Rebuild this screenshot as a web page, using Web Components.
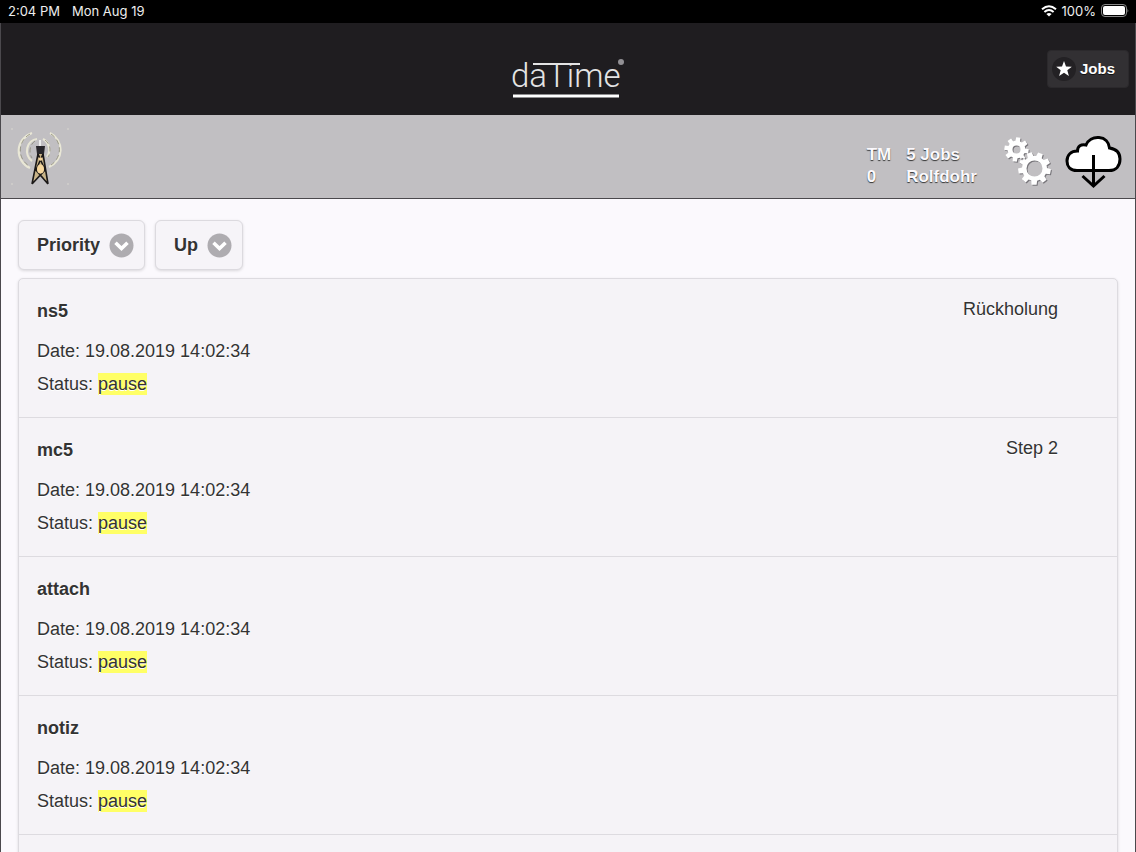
<!DOCTYPE html>
<html lang="en">
<head>
<meta charset="utf-8">
<meta name="viewport" content="width=device-width, initial-scale=1">
<title>daTime Jobs</title>
<style>
  body { margin: 0; background: #fbf9fd; color: #333; font: 18px/24px "Liberation Sans", Arial, sans-serif; }
</style>
</head>
<body>
<job-app></job-app>
<script>
const define = (name, html, setup) => customElements.define(name, class extends HTMLElement {
  connectedCallback() {
    if (this.shadowRoot) return;
    const t = document.createElement('template');
    t.innerHTML = html;
    this.attachShadow({ mode: 'open' }).append(t.content.cloneNode(true));
    if (setup) setup(this, this.shadowRoot);
  }
});

define('status-bar', `
<style>
  :host { display: flex; justify-content: space-between; align-items: center; box-sizing: border-box; height: 23px; padding: 0 7px 2px 8px;
    background: #000; color: #eee; font: 13px/16px Inter, sans-serif; flex: none; }
  div { display: flex; align-items: center; gap: 12px; }
  .right { gap: 5px; }
  svg { display: block; }
</style>
<div><span>2:04 PM</span><span>Mon Aug 19</span></div>
<div class="right">
  <svg width="16" height="12" viewBox="0 0 16 12" fill="none" stroke="#fff" stroke-width="2"><path d="M1 4.3Q8-1.8 15 4.3M3.4 7Q8 3 12.6 7"/><path d="M8 11.6 5.4 9Q8 6.8 10.6 9Z" fill="#fff" stroke="none"/></svg>
  <span>100%</span>
  <svg width="28" height="13" viewBox="0 0 28 13"><rect x=".5" y=".5" width="25" height="12" rx="3.5" fill="none" stroke="#888"/><rect x="2" y="2" width="22" height="9" rx="2" fill="#fff"/><path d="M26.5 4.5q1.5 2 0 4z" fill="#888"/></svg>
</div>`);

define('brand-logo', `
<style>:host { display: block; } svg { display: block; overflow: visible; }</style>
<svg width="112" height="46" viewBox="0 0 112 46" role="img" aria-label="daTime">
  <text x="-2" y="34" font-family="Roboto" font-weight="300" font-size="33" fill="#e4e4e4">daTime</text>
  <path d="M20 11H67" stroke="#e4e4e4" stroke-width="2"/>
  <path d="M0 43H106" stroke="#fff" stroke-width="3"/>
  <circle cx="108" cy="9" r="3" fill="#929094"/>
</svg>`);

define('title-bar', `
<style>
  :host { display: grid; grid-template-columns: 1fr auto 1fr; align-items: center; height: 92px; padding: 0 6px 0 7px; background: #1f1d20; flex: none; }
  brand-logo { grid-column: 2; margin-top: 14px; }
  button { justify-self: end; display: flex; align-items: center; gap: 4px; height: 38px; padding: 0 13px 0 4px;
    border: 1px solid #2b292c; border-radius: 4px; background: #323033; color: #fff; font: bold 15px/20px "Liberation Sans", Arial, sans-serif; text-shadow: 0 1px 0 #111; }
</style>
<brand-logo></brand-logo>
<button type="button"><svg width="24" height="24" viewBox="0 0 24 24"><circle cx="12" cy="12" r="12" fill="#232124"/><path d="M12 4 14 9.4 19.8 9.7 15.3 13.3 16.9 19 12 15.8 7.1 19 8.7 13.3 4.2 9.7 10 9.4Z" fill="#fff"/></svg>Jobs</button>`);

define('cog-pair', `
<style>:host { display: block; } svg { display: block; }</style>
<svg width="48" height="50" viewBox="0 0 48 50"></svg>`, (host, root) => {
  const gear = (cx, cy, outer, inner, hole, teeth, turn) => {
    const pts = [];
    for (let i = 0; i < teeth; i++) {
      for (const [o, r] of [[-.34, inner], [-.22, outer], [.22, outer], [.34, inner]]) {
        const a = (i + o) * 2 * Math.PI / teeth + turn;
        pts.push((cx + r * Math.cos(a)).toFixed(2) + ' ' + (cy + r * Math.sin(a)).toFixed(2));
      }
    }
    return `M${pts.join('L')}ZM${cx - hole} ${cy}a${hole} ${hole} 0 1 0 ${2 * hole} 0a${hole} ${hole} 0 1 0 ${-2 * hole} 0Z`;
  };
  const d = gear(12.5, 12.5, 12.3, 8.8, 4, 8, .15) + gear(30.5, 31.5, 16.5, 12.5, 8, 9, .2);
  root.querySelector('svg').innerHTML =
    `<path d="${d}" fill="#77757a" fill-rule="evenodd" transform="translate(1 1)"/><path d="${d}" fill="#fff" fill-rule="evenodd"/>`;
});

define('info-bar', `
<style>
  :host { display: flex; align-items: center; height: 83px; padding: 0 13px 0 9px; background: #c1bfc2; border-bottom: 1px solid #4b494d; flex: none; }
  dl { display: grid; grid-template-columns: auto auto; grid-auto-flow: column; grid-template-rows: 22px 22px; column-gap: 15px;
    margin: 18px 27px 0 auto; color: #fbf9fd; font-size: 17px; line-height: 22px; text-shadow: 0 1px 1px #333; font-weight: bold; }
  dt, dd { margin: 0; }
  a { display: block; margin-top: 10px; }
  a + a { margin-left: 13px; }
  svg { display: block; }
</style>
<svg width="60" height="60" viewBox="0 0 60 60" fill="none">
  <g stroke="#e9e7d6" stroke-width="2.200"><path d="M22 6A20 19 0 0 0 20 41M40 6A20 19 0 0 1 39 40"/><path d="M27 12A11 12 0 0 0 22 34M33 12A11 12 0 0 1 37 30"/></g>
  <g stroke="#8c8a76" stroke-width=".8" stroke-dasharray="5 3"><path d="M20 7A20 19 0 0 0 19 39M41 7A20 19 0 0 1 41 38M25 14A11 12 0 0 0 22 31M35 13A11 12 0 0 1 38 30"/></g>
  <path d="M28 27h5l5 29-8-8-8 8z" fill="#c9b488"/>
  <path d="M28 27 35 43 22 57M33 27 26 43 38 57M28 27 22 57M33 27 38 57" stroke="#1b1817" stroke-width="1.600"/>
  <ellipse cx="30.500" cy="42" rx="3.500" ry="4.500" fill="#f6d69c"/>
  <circle cx="30.500" cy="32" r="1.800" fill="#f4d39a"/>
  <path d="M26 19h9l-1 8h-7z" fill="#29272b"/><path d="M30 19v-6" stroke="#eee" stroke-width="2"/>
  <path d="M1 2h2M57 2h2M1 57h2M57 57h2" stroke="#d9d7d0"/>
</svg>
<dl><dt>TM</dt><dd>0</dd><dt>5 Jobs</dt><dd>Rolfdohr</dd></dl>
<a href="#settings" aria-label="Settings"><cog-pair></cog-pair></a>
<a href="#download" aria-label="Download"><svg width="57" height="54" viewBox="0 0 57 54" fill="none" stroke="#000" stroke-width="3">
  <path d="M12 35.500C5 35.500 2 31 2 26C2 20 6 16 12.500 16C12.500 11 16 9 21 10C23 5 28 2 34 2.500C40 3 44 7 44.500 13C51 14 55 18 55 24C55 31 51 35.500 44 35.500Z" fill="#fff"/>
  <path d="M28.500 20V51M17.500 41 28.500 51 39.500 41" stroke-width="3"/></svg></a>`);

define('sort-select', `
<style>
  :host { display: grid; border: 1px solid #dcdadf; border-radius: 6px; background: #f6f4f8; box-shadow: 0 1px 3px #0002; box-sizing: border-box; }
  select, svg { grid-area: 1 / 1; }
  select { appearance: none; field-sizing: content; height: 48px; margin: 0; padding: 0 44px 0 18px; border: 0; background: none; color: #333;
    font: bold 18px/24px "Liberation Sans", Arial, sans-serif; text-shadow: 0 1px 0 #fff; }
  svg { justify-self: end; align-self: center; margin-right: 10px; pointer-events: none; }
</style>
<select></select>
<svg width="25" height="25" viewBox="0 0 25 25"><circle cx="12.500" cy="12.500" r="12" fill="#aeacb0"/><path d="M6.500 9.800 12.500 15.500 18.500 9.800" fill="none" stroke="#fff" stroke-width="3.600"/></svg>`,
(host, root) => {
  const select = root.querySelector('select');
  select.setAttribute('aria-label', host.getAttribute('label'));
  host.getAttribute('options').split(',').forEach(o => select.add(new Option(o)));
});

define('job-row', `
<style>
  :host { display: block; }
  a { display: grid; grid-template-columns: 1fr auto; box-sizing: border-box; padding: 20px 59px 16px 18px;
    border-bottom: 1px solid #dddbe0; color: #333; text-decoration: none; text-shadow: 0 1px 0 #fff; align-content: start; }
  h2, p { margin: 0; }
  h2 { font-size: 18px; line-height: 24px; }
  .lines { grid-column: 1 / -1; margin-top: 12px; line-height: 33px; }
  .note { line-height: 20px; }
  mark { padding: 1px 0; background: #ffff66; color: inherit; }
</style>
<a href="#job"><h2><slot></slot></h2><p class="note"><slot name="note"></slot></p>
  <div class="lines"><p>Date: 19.08.2019 14:02:34</p><p>Status: <mark>pause</mark></p></div></a>`);

define('job-list', `
<style>
  :host { display: block; background: #f5f3f7; border: 1px solid #dddbe0; border-radius: 5px 5px 0 0; box-shadow: 0 1px 3px #0002; }
</style>
<slot></slot>`);

define('job-app', `
<style>
  :host { display: flex; flex-direction: column; height: 100vh; overflow: hidden; }
  .page { flex: 1; min-height: 0; display: flex; flex-direction: column; border: solid #4b494d; border-width: 0 1px; }
  main { flex: 1; min-height: 0; overflow: auto; scrollbar-width: none; padding: 21px 17px 0; }
  .sort { display: flex; gap: 10px; margin-bottom: 8px; }
  .spacer { height: 139px; }
</style>
<status-bar></status-bar>
<div class="page">
  <title-bar></title-bar>
  <info-bar></info-bar>
  <main>
    <div class="sort">
      <sort-select label="Sort by" options="Priority,Date,Status"></sort-select>
      <sort-select label="Direction" options="Up,Down"></sort-select>
    </div>
    <job-list>
      <job-row>ns5<span slot="note">Rückholung</span></job-row>
      <job-row>mc5<span slot="note">Step 2</span></job-row>
      <job-row>attach</job-row>
      <job-row>notiz</job-row>
      <div class="spacer"></div>
    </job-list>
  </main>
</div>`);
</script>
</body>
</html>
